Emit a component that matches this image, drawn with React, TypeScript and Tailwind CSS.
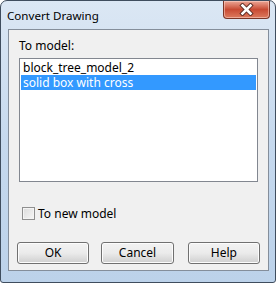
import React from 'react';

const font = { fontFamily: '"Noto Sans", "Open Sans", sans-serif' };

const CloseGlyph: React.FC = () => (
  <svg width="15" height="13" viewBox="0 0 15 13">
    <path d="M3.5 2.5 L11.5 10.5 M11.5 2.5 L3.5 10.5" stroke="#5a2a22" strokeWidth="4.4" strokeLinecap="square" fill="none" />
    <path d="M3.5 2.5 L11.5 10.5 M11.5 2.5 L3.5 10.5" stroke="#ffffff" strokeWidth="2.6" strokeLinecap="square" fill="none" />
  </svg>
);

const DialogButton: React.FC<{ label: string; className?: string }> = ({ label, className }) => (
  <button
    className={`h-[22px] w-[73px] rounded-[3px] border border-[#707070] bg-gradient-to-b from-[#f2f2f2] via-[#ebebeb] to-[#cfcfcf] text-[12px] leading-none text-black shadow-[inset_0_0_0_1px_#fcfcfc] ${className ?? ''}`}
  >
    {label}
  </button>
);

export default function App() {
  const items = ['block_tree_model_2', 'solid box with cross'];
  const selected = 1;

  return (
    <div className="w-[276px] h-[283px] bg-white" style={font}>
      <div className="flex h-full w-full flex-col rounded-t-[7px] rounded-b-[3px] border border-[#3f4d5e] bg-gradient-to-b from-[#dbe7f4] via-[#c6d9ee] to-[#bcd2ea]">
        {/* Title bar */}
        <div className="flex h-[28px] items-start justify-between">
          <span className="pl-[6px] pt-[7px] text-[11.6px] leading-[15px] text-black">Convert Drawing</span>
          <div className="mr-[5px] flex h-[18px] w-[47px] items-center justify-center rounded-b-[4px] border border-t-0 border-[#7a3527] bg-gradient-to-b from-[#eba696] via-[#c84a33] to-[#dc7a5e] shadow-[inset_0_0_0_1px_rgba(255,220,210,0.5)]">
            <CloseGlyph />
          </div>
        </div>

        {/* Client area */}
        <div className="mb-[11px] ml-[7px] mr-[6px] flex flex-1 flex-col border border-[#848e9b] bg-[#f0f0f0] px-[10px]">
          <div className="pt-[8px] text-[12px] leading-[15px] text-black">To model:</div>

          <div className="mt-[5px] h-[124px] border border-[#828790] bg-white p-px">
            {items.map((item, i) => (
              <div
                key={item}
                className={`h-[15px] overflow-hidden pl-[2px] text-[12px] leading-[15px] ${i === selected ? 'bg-[#3399ff] text-white' : 'text-black'}`}
              >
                {item}
              </div>
            ))}
          </div>

          <label className="mt-[24px] flex items-center gap-[3px] pl-[3px] text-[12px] leading-[15px] text-black">
            <span className="inline-block h-[13px] w-[13px] border border-[#8f8f8f] bg-gradient-to-br from-[#dcdcdc] to-[#f6f6f6] shadow-[inset_0_0_0_1px_#f4f4f4]" />
            To new model
          </label>

          <div className="mt-[21px] -mx-[2px] flex">
            <DialogButton label="OK" />
            <DialogButton label="Cancel" className="ml-[12px]" />
            <DialogButton label="Help" className="ml-[14px]" />
          </div>
        </div>
      </div>
    </div>
  );
}
